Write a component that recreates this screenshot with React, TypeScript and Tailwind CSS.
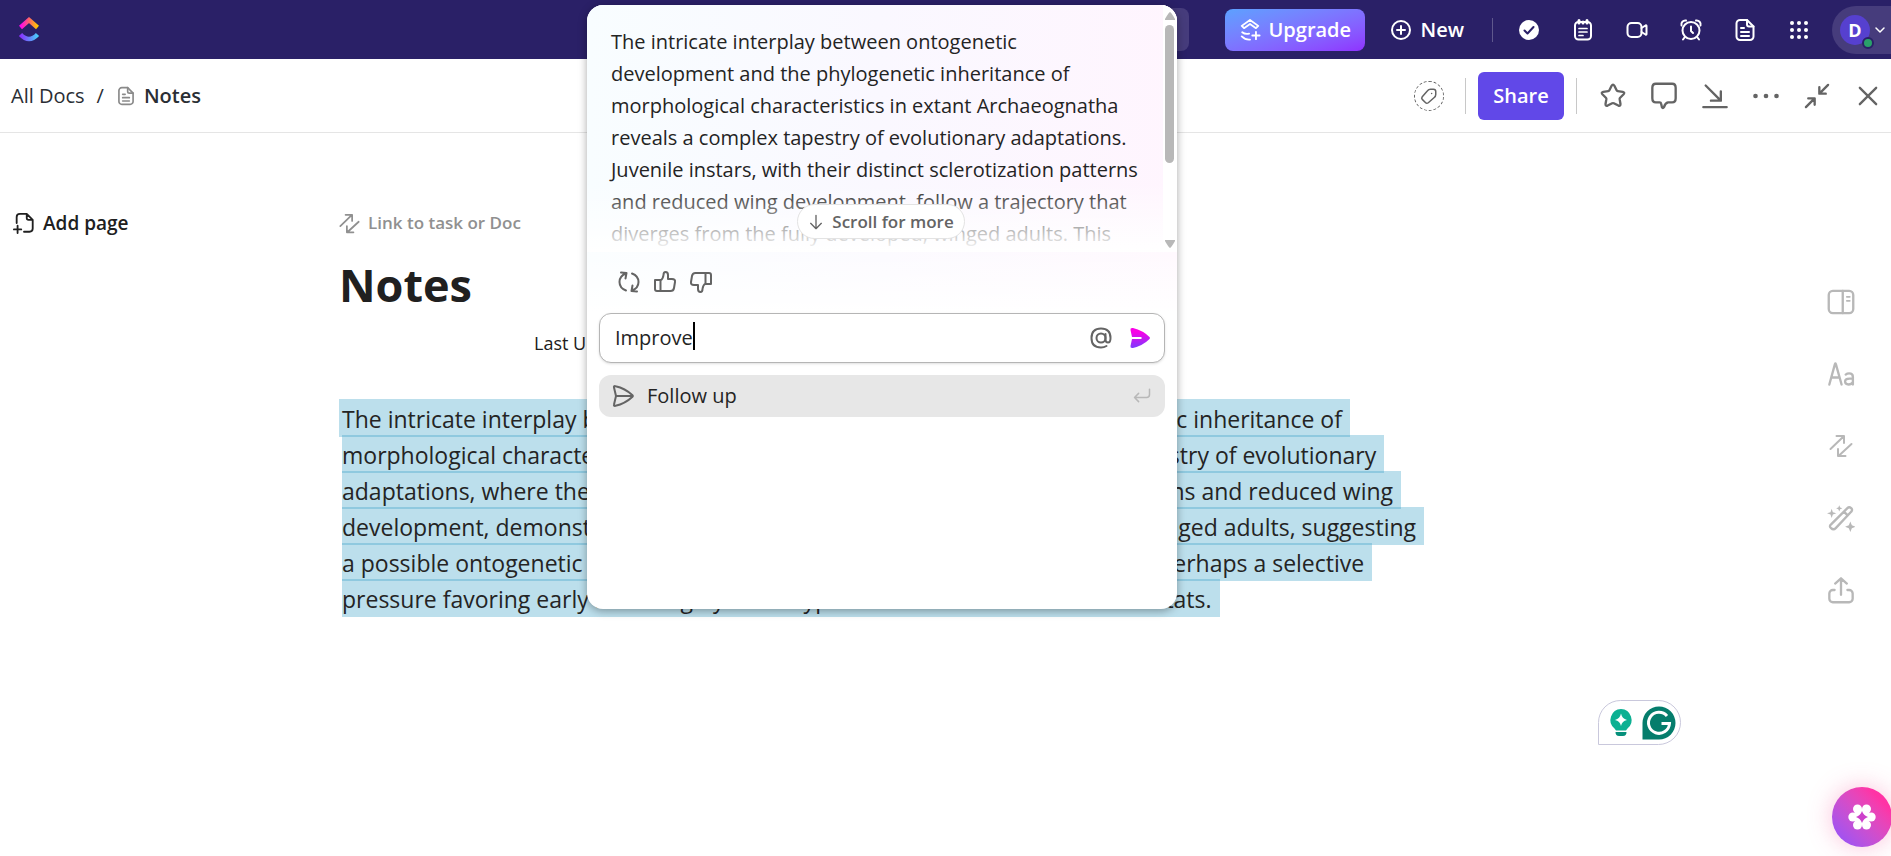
import React, { useState } from 'react';

interface IconProps {
  children: React.ReactNode;
  className?: string;
  width?: number;
}

// All line icons share one 24px grid
const Icon: React.FC<IconProps> = ({ children, className = 'size-6', width = 2 }) => (
  <svg
    viewBox="0 0 24 24"
    fill="none"
    stroke="currentColor"
    strokeWidth={width}
    strokeLinecap="round"
    strokeLinejoin="round"
    aria-hidden="true"
    className={`shrink-0 ${className}`}
  >
    {children}
  </svg>
);

const DocIcon = ({ className }: { className?: string }) => (
  <Icon className={className}>
    <path d="M14 2H7a3.5 3.5 0 0 0-3.5 3.5v13A3.5 3.5 0 0 0 7 22h10a3.5 3.5 0 0 0 3.5-3.5V8.5Z" />
    <path d="M14 2v4.5a2 2 0 0 0 2 2h4.5M8 10h3M8 14h8M8 18h8" />
  </Icon>
);

const LinkIcon = ({ className }: { className?: string }) => (
  <Icon className={className}>
    <path d="M1.5 15 14.5 2.5M7.5 2H15v7M22.5 10 9.5 22M9 15v7h7.5" />
  </Icon>
);

const topActions = [
  {
    label: 'Tasks',
    icon: (
      <Icon>
        <circle cx="12" cy="12" r="10" fill="currentColor" stroke="none" />
        <path d="m7.5 12.5 3 3 6-6.5" stroke="#2a2067" />
      </Icon>
    ),
  },
  {
    label: 'Notepad',
    icon: (
      <Icon>
        <rect x="4" y="4" width="16" height="17.5" rx="3.5" />
        <path d="M8 2.5V5M12 4v1M16 2.5V5" strokeWidth="3" />
        <path d="M8 10.5h8M8 14h8M8 17.5h4" strokeWidth="1.7" />
      </Icon>
    ),
  },
  {
    label: 'Record a clip',
    icon: (
      <Icon>
        <rect x="2.5" y="5" width="14" height="14" rx="4" />
        <path d="m16.5 10 4-2.5q1-.5 1 .5v8q0 1-1 .5l-4-2.5" />
      </Icon>
    ),
  },
  {
    label: 'Reminders',
    icon: (
      <Icon>
        <circle cx="12" cy="12.5" r="8.5" />
        <path d="M12 8.5V13l2 2M2.5 7.5a4 4 0 0 1 4.5-5M21.5 7.5a4 4 0 0 0-4.5-5M5.5 19.5 4 21.5M18.5 19.5l1.5 2" />
      </Icon>
    ),
  },
  { label: 'New doc', icon: <DocIcon className="size-6" /> },
  {
    label: 'Apps',
    icon: (
      <Icon>
        <g fill="currentColor" stroke="none">
          {[5, 12, 19].map((cy) => [5, 12, 19].map((cx) => <circle key={`${cx}-${cy}`} cx={cx} cy={cy} r="2" />))}
        </g>
      </Icon>
    ),
  },
];

const docActions = [
  {
    label: 'Favorite',
    icon: (
      <Icon className="size-7">
        <path d="M10.8 3.2q1.2-2 2.4 0l1.9 3.9q.3.6 1 .7l4.3.6q2 .5.7 2.1l-3 3q-.5.5-.4 1.2l.7 4.2q.1 2-1.8 1.3l-3.9-2q-.7-.3-1.4 0l-3.9 2q-1.9.7-1.8-1.3l.7-4.2q.1-.7-.4-1.2l-3-3q-1.3-1.6.7-2.1l4.3-.6q.7-.1 1-.7Z" />
      </Icon>
    ),
  },
  {
    label: 'Comments',
    icon: (
      <Icon className="size-7">
        <path d="M5 1.5h14q3 0 3 3.5v9q0 3.5-3 3.5h-3.5q-2.5.5-3.5 4-1 1.5-1.8 0l-.7-3q-.2-1-1.2-1H5q-3 0-3-3.5V5q0-3.5 3-3.5Z" />
      </Icon>
    ),
  },
  {
    label: 'Download',
    icon: (
      <Icon className="size-7">
        <path d="m4 3 12.5 12.5M17 8v8H8.5M2 21.5h20" />
      </Icon>
    ),
  },
  {
    label: 'More',
    icon: (
      <Icon className="size-7">
        <g fill="currentColor" stroke="none">
          <circle cx="3" cy="12" r="2" />
          <circle cx="12" cy="12" r="2" />
          <circle cx="21" cy="12" r="2" />
        </g>
      </Icon>
    ),
  },
  {
    label: 'Collapse',
    icon: (
      <Icon className="size-7">
        <path d="m2.5 21.5 7-7M4.5 14H10v5.5M21.5 2.5l-7 7M14 4.5V10h5.5" />
      </Icon>
    ),
  },
  {
    label: 'Close',
    icon: (
      <Icon className="size-7">
        <path d="m5 5 14 14M19 5 5 19" />
      </Icon>
    ),
  },
];

const railActions = [
  {
    label: 'Page details',
    icon: (
      <Icon className="size-7">
        <rect x="1.5" y="2.5" width="21" height="19" rx="3.5" />
        <path d="M13.5 2.5v19" />
        <path d="M17 7.5h2.5M17 11h2.5" strokeWidth="1.5" />
      </Icon>
    ),
  },
  {
    label: 'Typography',
    icon: (
      <Icon className="size-7">
        <path d="M2 21 6.8 3.5q.4-1 .8 0L12.5 21M3.8 15h7" />
        <path d="M16 12.5q1.2-1 3-1 3.2 0 3.2 3V21M22.2 16h-3q-3.7 0-3.7 2.4 0 2.4 3 2.6 2.5 0 3.7-2" />
      </Icon>
    ),
  },
  { label: 'Relationships', icon: <LinkIcon className="size-6" /> },
  {
    label: 'AI',
    icon: (
      <Icon className="size-7">
        <path d="m3.5 17.5 14-14q1.5-1.5 3.2 0 1.5 1.7 0 3.2l-13.2 14q-2 2-4 0-2-1.5 0-3.2ZM14.5 6.5l3 3" />
        <path
          d="M4 4 5 7l3 1-3 1-1 3-1-3-3-1 3-1ZM10.5 1l.8 1.9 1.9.8-1.9.8-.8 1.9-.8-1.9-1.9-.8 1.9-.8ZM20 15l1.3 3.2 3.2 1.3-3.2 1.3L20 24l-1.3-3.2-3.2-1.3 3.2-1.3Z"
          fill="currentColor"
          stroke="none"
        />
      </Icon>
    ),
  },
  {
    label: 'Share and export',
    icon: (
      <Icon className="size-7">
        <path d="M12 16V2M7 6.5 12 2l5 4.5M6.5 12H5a3 3 0 0 0-3 3v4.5a3 3 0 0 0 3 3h14a3 3 0 0 0 3-3V15a3 3 0 0 0-3-3h-1.5" />
      </Icon>
    ),
  },
];

const noteLines = [
  'The intricate interplay between ontogenetic development and the phylogenetic inheritance of',
  'morphological characteristics in extant Archaeognatha shows a complex tapestry of evolutionary',
  'adaptations, where the juvenile instars with their distinct sclerotization patterns and reduced wing',
  'development, demonstrate a trajectory that diverges from fully developed winged adults, suggesting',
  'a possible ontogenetic recapitulation of ancestral flightless morphologies or perhaps a selective',
  'pressure favoring early maturing by some types of soil and coastal microhabitats.',
];

const answerLines = [
  'The intricate interplay between ontogenetic',
  'development and the phylogenetic inheritance of',
  'morphological characteristics in extant Archaeognatha',
  'reveals a complex tapestry of evolutionary adaptations.',
  'Juvenile instars, with their distinct sclerotization patterns',
  'and reduced wing development, follow a trajectory that',
  'diverges from the fully developed, winged adults. This',
];

const TopBar = () => (
  <header className="flex h-[59px] items-center bg-[#2a2067] text-white">
    <a href="#" aria-label="Home" className="ml-[18px]">
      <svg viewBox="0 0 22 28" className="h-7 w-[22px]" aria-hidden="true">
        <defs>
          <linearGradient id="roof" x1="0" x2="1">
            <stop offset="0" stopColor="#ff02f0" />
            <stop offset=".55" stopColor="#ff6d5c" />
            <stop offset="1" stopColor="#ffc800" />
          </linearGradient>
          <linearGradient id="smile" x1="0" x2="1">
            <stop offset="0" stopColor="#8930fd" />
            <stop offset="1" stopColor="#49ccf9" />
          </linearGradient>
        </defs>
        <path d="m2.5 11.5 8.5-7.5 8.5 7.5" fill="none" stroke="url(#roof)" strokeWidth="4.5" />
        <path d="M2.5 18.5q8.5 9 17 0" fill="none" stroke="url(#smile)" strokeWidth="4.5" />
      </svg>
    </a>
    <div className="ml-auto h-[43px] w-64 rounded-lg bg-[#463c7c]" />
    <button className="ml-9 flex h-[42px] w-[140px] items-center gap-2 rounded-lg bg-linear-to-br from-[#5ba1ff] to-[#8f30ff] pl-[14px] text-[20px] font-semibold">
      <Icon className="size-[22px]">
        <path d="M3 7.5 12 1l9 6.5-2.5 2.5L12 5.5 5.5 10ZM3.5 14.5q3 2.5 7.5 1.5M3 19q4 4 9 3.5M18.5 14v8M14.5 18h8" />
      </Icon>
      Upgrade
    </button>
    <button className="ml-6 flex items-center gap-2 text-[20px] font-semibold">
      <Icon className="size-6">
        <circle cx="12" cy="12" r="9" />
        <path d="M12 8v8M8 12h8" />
      </Icon>
      New
    </button>
    <div className="ml-7 h-6 w-px bg-white/25" />
    <div className="ml-6 flex gap-[30px]">
      {topActions.map((a) => (
        <button key={a.label} aria-label={a.label}>
          {a.icon}
        </button>
      ))}
    </div>
    <button aria-label="Account" className="ml-[21px] flex h-12 w-[59px] items-center gap-1 rounded-l-full rounded-r-3xl bg-[#463c7c] pl-2">
      <span className="relative flex size-[30px] items-center justify-center rounded-full bg-[#5640cf] text-lg font-bold">
        D
        <span className="absolute -right-1 -bottom-1 size-3 rounded-full border-2 border-[#2a2067] bg-[#2aa06a]" />
      </span>
      <Icon className="size-3" width={3}>
        <path d="m4 8 8 8 8-8" />
      </Icon>
    </button>
  </header>
);

const DocBar = () => (
  <div className="flex h-[74px] items-center border-b border-[#e5e5e5] text-[#2a2e34]">
    <nav className="ml-[11px] flex items-center text-[20px]">
      <a href="#">All Docs</a>
      <span className="mx-3">/</span>
      <DocIcon className="size-5 text-[#8a8a8a]" />
      <a href="#" className="ml-2 font-semibold">Notes</a>
    </nav>
    <button aria-label="Add tag" className="ml-auto flex size-[30px] items-center justify-center rounded-full border border-dashed border-[#646464] text-[#646464]">
      <Icon className="size-[18px]">
        <path d="m3 13 7-8q1.5-2 4-2h4q3 0 3 3v4q0 2.5-2 4l-8 7q-2 1.5-3.5 0L3 16.5Q1.5 15 3 13Z" />
        <circle cx="15.5" cy="8.5" r="1" fill="currentColor" stroke="none" />
      </Icon>
    </button>
    <div className="ml-[21px] h-9 w-px bg-[#c8c8c8]" />
    <button className="ml-3 h-12 w-[86px] rounded-md bg-[#6148e8] text-[20px] font-semibold text-white">Share</button>
    <div className="ml-3 h-9 w-px bg-[#c8c8c8]" />
    <div className="mr-[9px] ml-[22px] flex gap-[23px] text-[#646464]">
      {docActions.map((a) => (
        <button key={a.label} aria-label={a.label}>
          {a.icon}
        </button>
      ))}
    </div>
  </div>
);

const AssistantPanel = () => {
  const [prompt, setPrompt] = useState('Improve');

  return (
    <section className="absolute top-[5px] left-[587px] h-[604px] w-[590px] overflow-hidden rounded-2xl bg-white shadow-[0_2px_8px_rgba(0,0,0,0.35)]">
      <div className="bg-linear-to-r from-[#f8fdff] via-[#faf8ff] to-[#fff5fe]">
        {/* Answer with its scrollbar */}
        <div className="relative flex h-[247px] overflow-hidden">
          <div className="flex-1 overflow-hidden pt-[21px] pl-6 text-[20px] leading-8 whitespace-nowrap text-[#242424]">
            {answerLines.map((line) => (
              <p key={line}>{line}</p>
            ))}
          </div>
          <div className="z-10 flex w-[14px] flex-col items-center bg-white pt-[7px] pr-px pb-1 text-[#b8b8b8]">
            <svg viewBox="0 0 10 8" className="h-2 w-[10px]" fill="currentColor" aria-hidden="true">
              <path d="M5 0q1 0 5 7v1H0V7Q4 0 5 0Z" />
            </svg>
            <div className="mt-[5px] h-[138px] w-[9px] rounded-full bg-[#b8b8b8]" />
            <svg viewBox="0 0 10 8" className="mt-auto h-2 w-[10px]" fill="currentColor" aria-hidden="true">
              <path d="M5 8q1 0 5-7V0H0v1q4 7 5 7Z" />
            </svg>
          </div>
          <div className="absolute inset-x-0 bottom-0 h-[68px] bg-linear-to-b from-transparent to-white" />
          <button className="absolute bottom-[13px] left-[210px] flex h-[35px] w-[168px] items-center justify-center gap-2 rounded-full border border-[#e3e3e3] bg-white text-[17px] font-semibold text-[#646464]">
            <Icon className="size-4">
              <path d="M12 2v19M4 14l8 8 8-8" />
            </Icon>
            Scroll for more
          </button>
        </div>
        <div className="flex h-[61px] items-center gap-3 bg-linear-to-b from-white/40 to-white pb-[2px] pl-[30px] text-[#646464]">
          <button aria-label="Regenerate">
            <Icon>
              <path d="M9 20.5Q2.5 18 2.5 12T9 3.5M4 2.5l5.5.5-1 5.5M15 3.5q6.5 2.5 6.5 8.5T15 20.5M20 21.5l-5.5-.5 1-5.5" />
            </Icon>
          </button>
          <button aria-label="Good answer">
            <Icon>
              <path d="M2 10h5.5v11H4q-2 0-2-2ZM7.5 10.5Q10 9 10.5 5q0-3 2-3Q15 2 15 5v4h4q3.5 0 3 3l-1 6q-.5 3-3.5 3h-10" />
            </Icon>
          </button>
          <button aria-label="Bad answer">
            <Icon>
              <path d="M22 14h-5.5V3H20q2 0 2 2ZM16.5 13.5Q14 15 13.5 19q0 3-2 3Q9 22 9 19v-4H5q-3.5 0-3-3l1-6q.5-3 3.5-3h10" />
            </Icon>
          </button>
        </div>
      </div>

      <div className="mx-3 flex h-[50px] items-center rounded-xl border border-[#b5b5b5] bg-white pr-3 pl-[15px] shadow-sm">
        <input
          aria-label="Prompt"
          value={prompt}
          onChange={(e) => setPrompt(e.target.value)}
          className="field-sizing-content text-[20px] text-[#242424] outline-none"
        />
        <span className="mb-1 h-7 w-[2px] bg-black" />
        <button aria-label="Mention" className="ml-auto text-[#646464]">
          <Icon>
            <circle cx="12" cy="12" r="4.5" />
            <path d="M16.5 8v5.5q0 3 2.5 3t2.5-4.5q0-9.5-9.5-9.5T2.5 12q0 9.5 9.5 9.5 3 0 5.5-1.5" />
          </Icon>
        </button>
        <button aria-label="Send" className="ml-[15px]">
          <svg viewBox="0 0 24 24" className="size-6" aria-hidden="true">
            <defs>
              <linearGradient id="send" x1="0" y1="0" x2="0" y2="1">
                <stop offset=".2" stopColor="#fa00e6" />
                <stop offset="1" stopColor="#7b3bff" />
              </linearGradient>
            </defs>
            <path d="M2.5 4Q2 1.5 5 2q10 2.5 16.5 9 1 1 0 2Q15 19.5 5 22q-3 .5-2.5-2L4 13h9.5v-2H4Z" fill="url(#send)" />
          </svg>
        </button>
      </div>

      <button className="mx-3 mt-3 flex h-[42px] w-[566px] items-center rounded-xl bg-[#e7e7e7] pr-[14px] pl-3 text-[20px] text-[#242424]">
        <Icon className="size-6 text-[#646464]">
          <path d="M3 3.5Q2.5 1.7 4.5 2.2q9.5 2 17 9 .8.8 0 1.6-7.5 7-17 9-2 .5-1.5-1.3L5 12ZM5 12h16" />
        </Icon>
        <span className="ml-3">Follow up</span>
        <Icon className="ml-auto size-[18px] text-[#b8b8b8]">
          <path d="M22 3v7q0 4-4 4H2M7.5 8.5 2 14l5.5 5.5" />
        </Icon>
      </button>
    </section>
  );
};

const App = () => (
  <div className="relative min-h-screen overflow-hidden bg-white font-['Open_Sans','Noto_Sans',sans-serif]">
    <TopBar />
    <DocBar />

    <main className="flex">
      <aside className="w-[339px] shrink-0 pt-[76px] pl-[13px]">
        <button className="flex items-center gap-2 text-[19px] leading-7 font-semibold text-[#202020]">
          <Icon className="size-[22px]">
            <path d="M4 12V5.5Q4 2 7.5 2H15l6.5 6.5V18q0 3.5-3.5 3.5h-6M15 2v4.5q0 2 2 2h4.5M5 15v8M1 19h8" />
          </Icon>
          Add page
        </button>
      </aside>

      <article className="flex-1 pt-[76px] text-[#202020]">
        <button className="flex items-center gap-2 text-[17px] leading-7 font-semibold text-[#909090]">
          <LinkIcon className="size-[21px]" />
          Link to task or Doc
        </button>
        <h1 className="mt-4 text-[45px] leading-[64px] font-bold">Notes</h1>
        <p className="mt-3 pl-[195px] text-[18px] leading-7">Last Updated: Today</p>
        <div className="mt-[42px] text-[23px] leading-10 whitespace-nowrap text-[#242424]">
          {noteLines.map((line, i) => (
            <p
              key={line}
              className={`-mb-0.5 h-[38px] w-fit bg-[#349ec6]/33 pr-2 ${i === 0 ? 'pl-[3px]' : 'ml-[3px]'}`}
            >
              {line}
            </p>
          ))}
        </div>
      </article>

      <aside className="flex w-[100px] flex-col items-center gap-11 pt-[155px] text-[#b8b8b8]">
        {railActions.map((a) => (
          <button key={a.label} aria-label={a.label} className="flex size-7 items-center justify-center">
            {a.icon}
          </button>
        ))}
      </aside>
    </main>

    <AssistantPanel />

    {/* Writing helper badge */}
    <div className="absolute top-[700px] right-[210px] flex h-[45px] w-[83px] items-center gap-2 rounded-full rounded-bl-none border border-[#c9c8dc] bg-white pl-[9px]">
      <svg viewBox="0 0 26 30" className="h-[30px] w-[26px]" aria-hidden="true">
        <path d="M13 1a11 11 0 0 1 6.5 19.5l-1.5 2H8l-1.5-2A11 11 0 0 1 13 1Z" fill="#0cb092" />
        <path d="M13 5.5q1 5 6 6.5-5 1-6 6-1-5-6-6 5-1.5 6-6.5Z" fill="#fff" />
        <path d="M7.5 24h11q0 4-3.5 4h-4q-3.5 0-3.5-4Z" fill="#05907b" />
      </svg>
      <svg viewBox="0 0 34 34" className="size-[34px]" aria-hidden="true">
        <path d="M17 .5a16.5 16.5 0 0 1 0 33H.5V17A16.5 16.5 0 0 1 17 .5Z" fill="#057d6c" />
        <path d="M25 10a10.5 10.5 0 1 0 2.5 7.5h-8" fill="none" stroke="#fff" strokeWidth="3" />
      </svg>
    </div>

    <button
      aria-label="Assistant"
      className="absolute -right-px bottom-[9px] flex size-[60px] items-center justify-center rounded-full bg-linear-to-tr from-[#9b51f5] from-10% to-[#ff33a5] to-80% shadow-[0_0_24px_rgba(245,80,150,0.35)]"
    >
      <svg viewBox="0 0 28 28" className="size-7" aria-hidden="true">
        <g fill="#fff">
          <circle cx="9.5" cy="6" r="4.5" />
          <circle cx="18.5" cy="6" r="4.5" />
          <circle cx="4.8" cy="14" r="4.5" />
          <circle cx="23.2" cy="14" r="4.5" />
          <circle cx="9.5" cy="22" r="4.5" />
          <circle cx="18.5" cy="22" r="4.5" />
          <circle cx="14" cy="14" r="8" />
        </g>
        <path d="M14 8q1.5 4.5 6 6-4.5 1.5-6 6-1.5-4.5-6-6 4.5-1.5 6-6Z" fill="#cd41cb" />
      </svg>
    </button>
  </div>
);

export default App;
